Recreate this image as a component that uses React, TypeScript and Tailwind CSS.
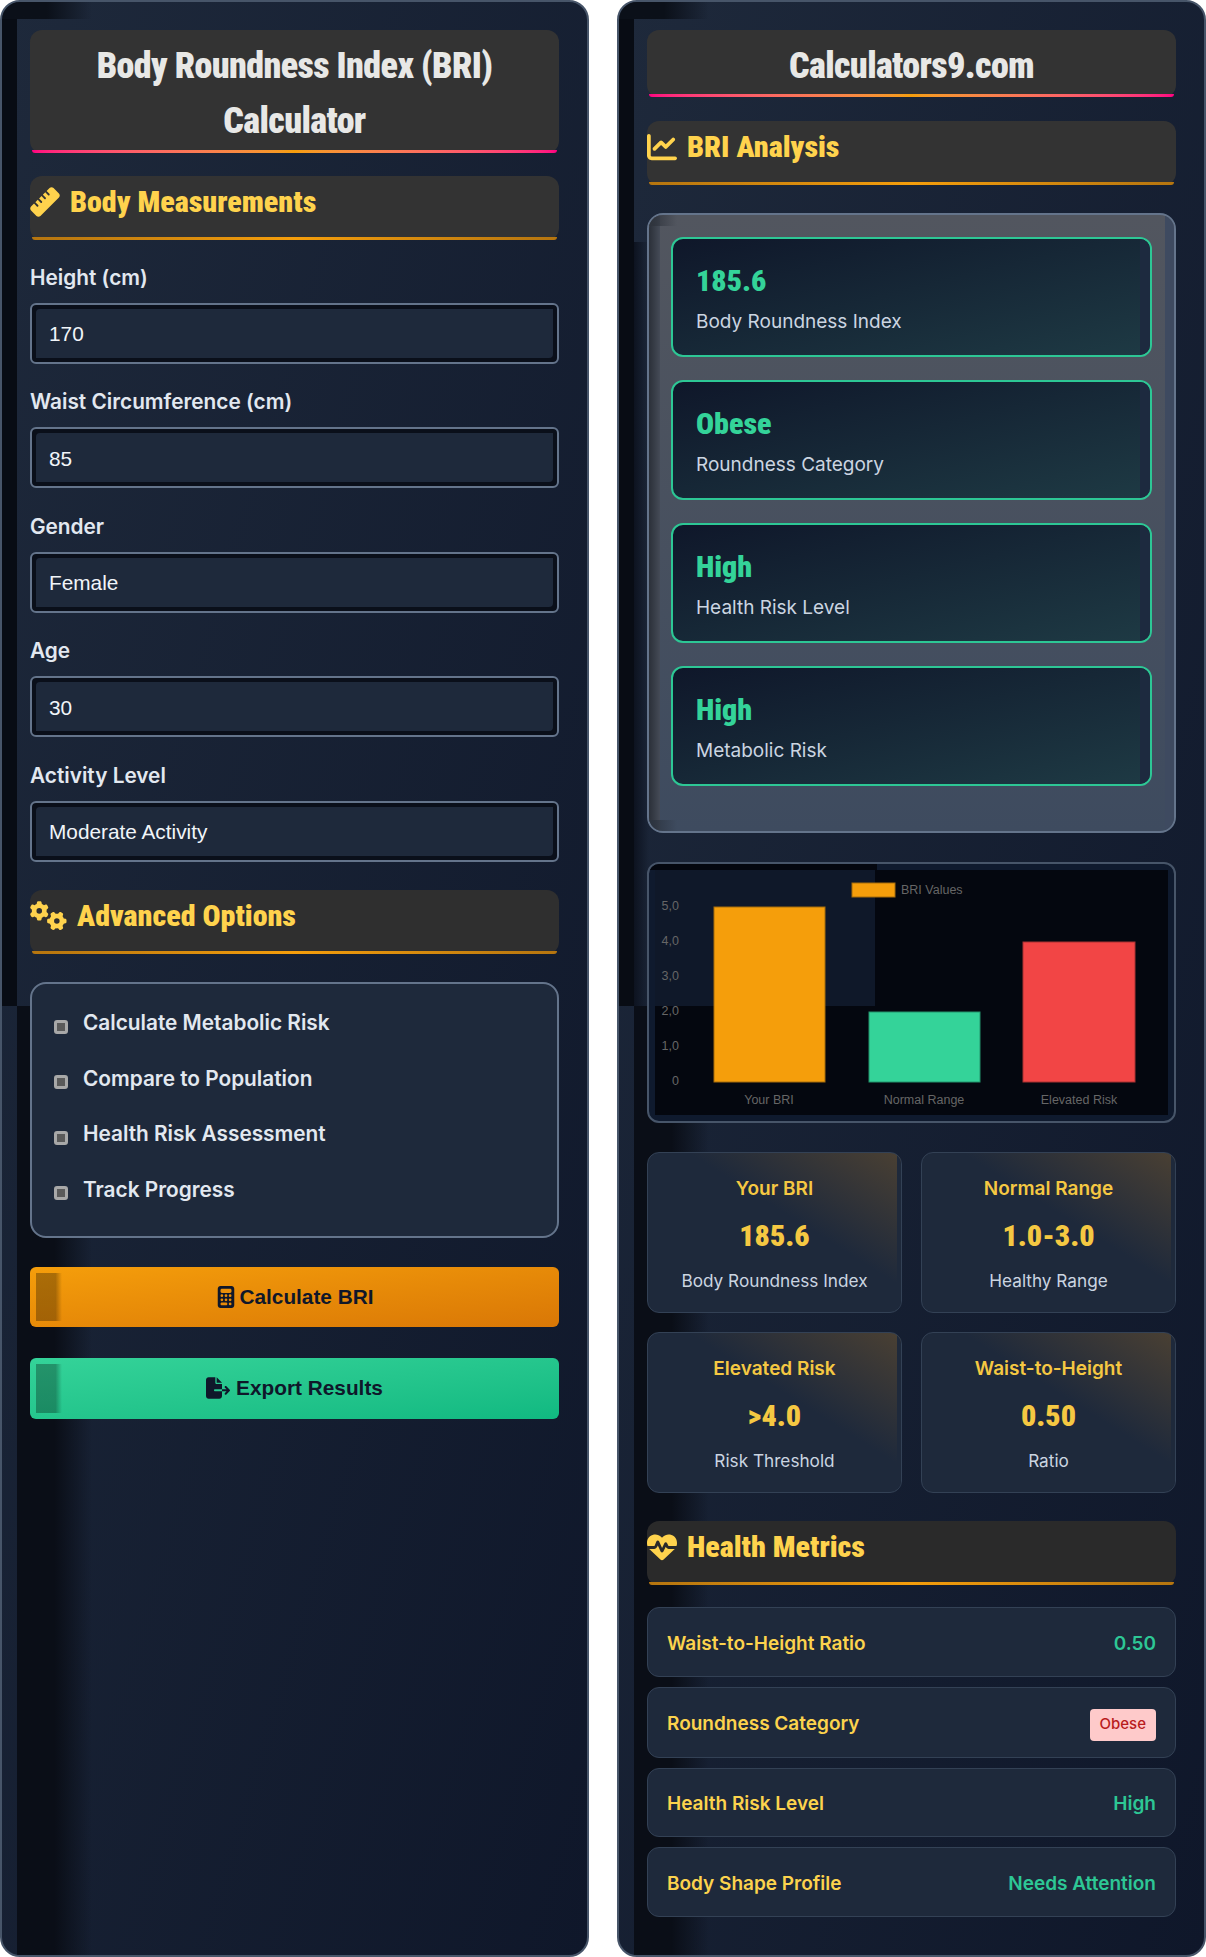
import { FaCalculator, FaChartLine, FaFileExport, FaGears, FaHeartPulse, FaRuler } from 'react-icons/fa6';
import type { ReactNode } from 'react';

const condensed = 'font-["Roboto_Condensed","Roboto",sans-serif] [font-stretch:75%] font-black';

function Panel({ children, shade }: { children: ReactNode; shade?: boolean }) {
  return (
    <div className="relative h-[1957px] overflow-hidden rounded-[20px] border-2 border-[#475569] bg-gradient-to-br from-[#1e293b] to-[#0f172a] px-[28px] pt-[28px] font-['Inter',sans-serif]">
      {/* broken inset shadow tiles seen in the page */}
      <div className="absolute left-0 top-0 h-[17px] w-[90px] bg-gradient-to-r from-[#0b1019] via-[#0b1019] to-transparent" />
      <div className="absolute left-0 top-[17px] h-[987px] w-[15px] bg-[#080c14]" />
      <div className="absolute bottom-0 left-[15px] top-[1004px] w-[75px] bg-gradient-to-r from-[#0a0e17] via-[#0a0e17] to-transparent" />
      {shade && <div className="absolute left-[15px] top-[240px] h-[764px] w-[15px] bg-gradient-to-r from-[#0d1320] to-transparent" />}
      <div className="relative">{children}</div>
    </div>
  );
}

function MainTitle({ children, pad }: { children: ReactNode; pad: string }) {
  return (
    <div className={`relative rounded-xl bg-[#333333] pt-[9px] text-center ${pad}`}>
      <h1 className={`${condensed} text-[36px] leading-[55px] tracking-[-0.6px] text-[#e8e8e6]`}>{children}</h1>
      <div className="absolute bottom-0 left-[2px] right-[2px] h-[3px] rounded-b-xl bg-gradient-to-r from-[#ff0080] via-[#f59e0b] to-[#ff0080]" />
    </div>
  );
}

function SectionTitle({ icon, label, bg = 'bg-[#333333]' }: { icon: ReactNode; label: string; bg?: string }) {
  return (
    <div className={`relative h-[64px] rounded-xl ${bg}`}>
      <h2 className={`${condensed} flex items-center gap-[10px] text-[30px] leading-[51px] text-[#ffd34d]`}>
        {icon}
        {label}
      </h2>
      <div className="absolute bottom-0 left-[2px] right-[2px] h-[3px] rounded-b-xl bg-gradient-to-r from-[#b5750f] via-[#f59e0b] to-[#b5750f]" />
    </div>
  );
}

function Field({ label, value }: { label: string; value: string }) {
  return (
    <div className="mb-[23.4px]">
      <div className="mb-[10px] text-[20.8px] font-semibold leading-[30px] text-[#e2e8f0]">{label}</div>
      <div className="flex h-[61px] items-center rounded-md border-2 border-[#64748b] bg-[#1e293b] px-[17px] pt-[1px] font-['Liberation_Sans',sans-serif] text-[20.8px] text-[#f1f5f9] shadow-[inset_4px_4px_0_#0a0f1a,inset_-4px_-4px_0_#0a0f1a]">
        {value}
      </div>
    </div>
  );
}

function Option({ label, last }: { label: string; last?: boolean }) {
  return (
    <div className={`flex h-[30px] items-center ${last ? '' : 'mb-[25.6px]'}`}>
      <span className="ml-[22px] mt-[8px] h-[14px] w-[14px] rounded-[3px] border-[3px] border-[#a8a8a8] bg-[#5a5a5a]" />
      <span className="ml-[15px] text-[20.8px] font-semibold text-[#e2e8f0]">{label}</span>
    </div>
  );
}

function ActionButton({ icon, label, bg, height, gap }: { icon: ReactNode; label: string; bg: string; height: string; gap: string }) {
  return (
    <div className={`relative flex ${height} items-center justify-center ${gap} rounded-md font-['Liberation_Sans',sans-serif] text-[20.8px] font-bold text-[#0f172a] ${bg}`}>
      <div className="absolute bottom-[6px] left-[6px] top-[6px] w-[26px] bg-gradient-to-r from-black/30 from-75% to-transparent" />
      {icon}
      {label}
    </div>
  );
}

function ResultCard({ value, label }: { value: string; label: string }) {
  return (
    <div className="relative mb-[23px] h-[120px] overflow-hidden rounded-xl border-2 border-[#2dc795] bg-gradient-to-br from-[#0f172a] to-[#1e3a44] px-[23px] pt-[20px]">
      <div className="absolute bottom-0 right-0 top-0 w-[10px] bg-[#1d2a3f]" />
      <div className={`${condensed} text-[30px] leading-[44px] text-[#34d399]`}>{value}</div>
      <div className="mt-[5px] text-[19px] leading-[28px] text-[#cbd5e1]">{label}</div>
    </div>
  );
}

function StatCard({ title, value, label }: { title: string; value: string; label: string }) {
  return (
    <div className="relative flex h-[161px] flex-col items-center overflow-hidden rounded-xl border border-[#334155] bg-[linear-gradient(to_top_right,#1e293b_58%,#4a4033)] pt-[22px]">
      <div className="absolute bottom-0 right-0 top-0 w-[4px] bg-[#1e293b]" />
      <div className="relative text-[19px] font-semibold leading-[28px] text-[#f5c842]">{title}</div>
      <div className={`${condensed} relative mt-[11px] text-[30px] leading-[44px] text-[#f5c842]`}>{value}</div>
      <div className="relative mt-[9px] text-[17.2px] leading-[28px] text-[#cbd5e1]">{label}</div>
    </div>
  );
}

function MetricRow({ label, value, height = 'h-[70px]' }: { label: string; value: ReactNode; height?: string }) {
  return (
    <div className={`mb-[10px] flex ${height} items-center justify-between rounded-xl border border-[#334155] bg-[#1e293b] px-[19px] pt-[4px] text-[19px] font-semibold`}>
      <span className="text-[#fcd34d]">{label}</span>
      {value}
    </div>
  );
}

function Chart() {
  const axis = ['5,0', '4,0', '3,0', '2,0', '1,0', '0'];
  return (
    <div className="relative h-[261px] overflow-hidden rounded-xl border-2 border-[#475569] bg-[#0f1a2e] p-[6px]">
      <div className="absolute left-0 top-0 h-[6px] w-[228px] bg-[#04070f]" />
      <div className="relative h-full overflow-hidden bg-[#04070f]">
        <div className="absolute left-0 top-0 h-[136px] w-[220px] bg-[#0f1829]" />
        <svg className="absolute left-0 top-0" width="512" height="245" fontFamily="Liberation Sans, sans-serif" fontSize="12.5" fill="#666666">
          <rect x="197" y="13" width="43" height="14" fill="#f59e0b" stroke="#a66c0c" />
          <text x="246" y="24">BRI Values</text>
          {axis.map((tick, i) => (
            <text key={tick} x="24" y={40 + i * 35} textAnchor="end">{tick}</text>
          ))}
          <rect x="59" y="37" width="111" height="175" fill="#f59e0b" stroke="#a66c0c" />
          <rect x="214" y="142" width="111" height="70" fill="#34d399" stroke="#23946c" />
          <rect x="368" y="72" width="112" height="140" fill="#f24545" stroke="#a83232" />
          <text x="114" y="234" textAnchor="middle">Your BRI</text>
          <text x="269" y="234" textAnchor="middle">Normal Range</text>
          <text x="424" y="234" textAnchor="middle">Elevated Risk</text>
        </svg>
      </div>
    </div>
  );
}

export default function App() {
  return (
    <div className="grid w-[1206px] grid-cols-2 gap-[28px] bg-white">
      {/* Left column */}
      <Panel>
        <MainTitle pad="pb-[4px]">Body Roundness Index (BRI) Calculator</MainTitle>
        <div className="mt-[23px] mb-[23px]">
          <SectionTitle icon={<FaRuler size={30} />} label="Body Measurements" />
        </div>
        <Field label="Height (cm)" value="170" />
        <Field label="Waist Circumference (cm)" value="85" />
        <Field label="Gender" value="Female" />
        <Field label="Age" value="30" />
        <Field label="Activity Level" value="Moderate Activity" />
        <div className="mt-[28px]">
          <SectionTitle icon={<FaGears size={37} />} label="Advanced Options" bg="bg-[#2f2f2f]" />
        </div>
        <div className="mt-[28px] h-[256px] rounded-2xl border-2 border-[#64748b] bg-[#1e293b] pt-[24px]">
          <Option label="Calculate Metabolic Risk" />
          <Option label="Compare to Population" />
          <Option label="Health Risk Assessment" />
          <Option label="Track Progress" last />
        </div>
        <div className="mt-[29px]">
          <ActionButton
            icon={<FaCalculator size={22} />}
            label="Calculate BRI"
            height="h-[60px]"
            gap="gap-[2px]"
            bg="bg-gradient-to-br from-[#f59e0b] to-[#d97706]"
          />
        </div>
        <div className="mt-[31px]">
          <ActionButton
            icon={<FaFileExport size={24} />}
            label="Export Results"
            height="h-[61px]"
            gap="gap-[6px]"
            bg="bg-gradient-to-br from-[#34d399] to-[#10b981]"
          />
        </div>
      </Panel>

      {/* Right column */}
      <Panel shade>
        <MainTitle pad="pb-[3px]">Calculators9.com</MainTitle>
        <div className="mt-[24px]">
          <SectionTitle icon={<FaChartLine size={30} />} label="BRI Analysis" />
        </div>
        <div className="relative mt-[28px] h-[620px] overflow-hidden rounded-2xl border-2 border-[#64748b] bg-gradient-to-b from-[#52565f] to-[#3e4b5f] p-[22px]">
          <div className="absolute bottom-0 right-0 top-0 w-[9px] bg-[#3e4a60]" />
          <div className="absolute bottom-0 left-0 top-0 w-[11px] bg-gradient-to-r from-[#2b3039] to-[#454b57]" />
          <div className="absolute left-0 top-0 h-[11px] w-[28px] bg-gradient-to-r from-[#2f343d] to-transparent" />
          <div className="absolute bottom-0 left-0 h-[11px] w-[28px] bg-gradient-to-r from-[#2c3440] to-transparent" />
          <div className="relative">
            <ResultCard value="185.6" label="Body Roundness Index" />
            <ResultCard value="Obese" label="Roundness Category" />
            <ResultCard value="High" label="Health Risk Level" />
            <ResultCard value="High" label="Metabolic Risk" />
          </div>
        </div>
        <div className="mt-[29px]">
          <Chart />
        </div>
        <div className="mt-[29px] grid grid-cols-2 gap-x-[19px] gap-y-[19px]">
          <StatCard title="Your BRI" value="185.6" label="Body Roundness Index" />
          <StatCard title="Normal Range" value="1.0-3.0" label="Healthy Range" />
          <StatCard title="Elevated Risk" value=">4.0" label="Risk Threshold" />
          <StatCard title="Waist-to-Height" value="0.50" label="Ratio" />
        </div>
        <div className="mt-[28px] mb-[22px]">
          <SectionTitle icon={<FaHeartPulse size={30} />} label="Health Metrics" bg="bg-[#2a2a2a]" />
        </div>
        <MetricRow label="Waist-to-Height Ratio" value={<span className="text-[#2dc795]">0.50</span>} />
        <MetricRow
          label="Roundness Category"
          height="h-[71px]"
          value={<span className="flex h-[32px] items-center rounded bg-[#fecaca] px-[10px] text-[15px] font-medium text-[#b91c1c]">Obese</span>}
        />
        <MetricRow label="Health Risk Level" height="h-[69px]" value={<span className="text-[#2dc795]">High</span>} />
        <MetricRow label="Body Shape Profile" value={<span className="text-[#2dc795]">Needs Attention</span>} />
      </Panel>
    </div>
  );
}
